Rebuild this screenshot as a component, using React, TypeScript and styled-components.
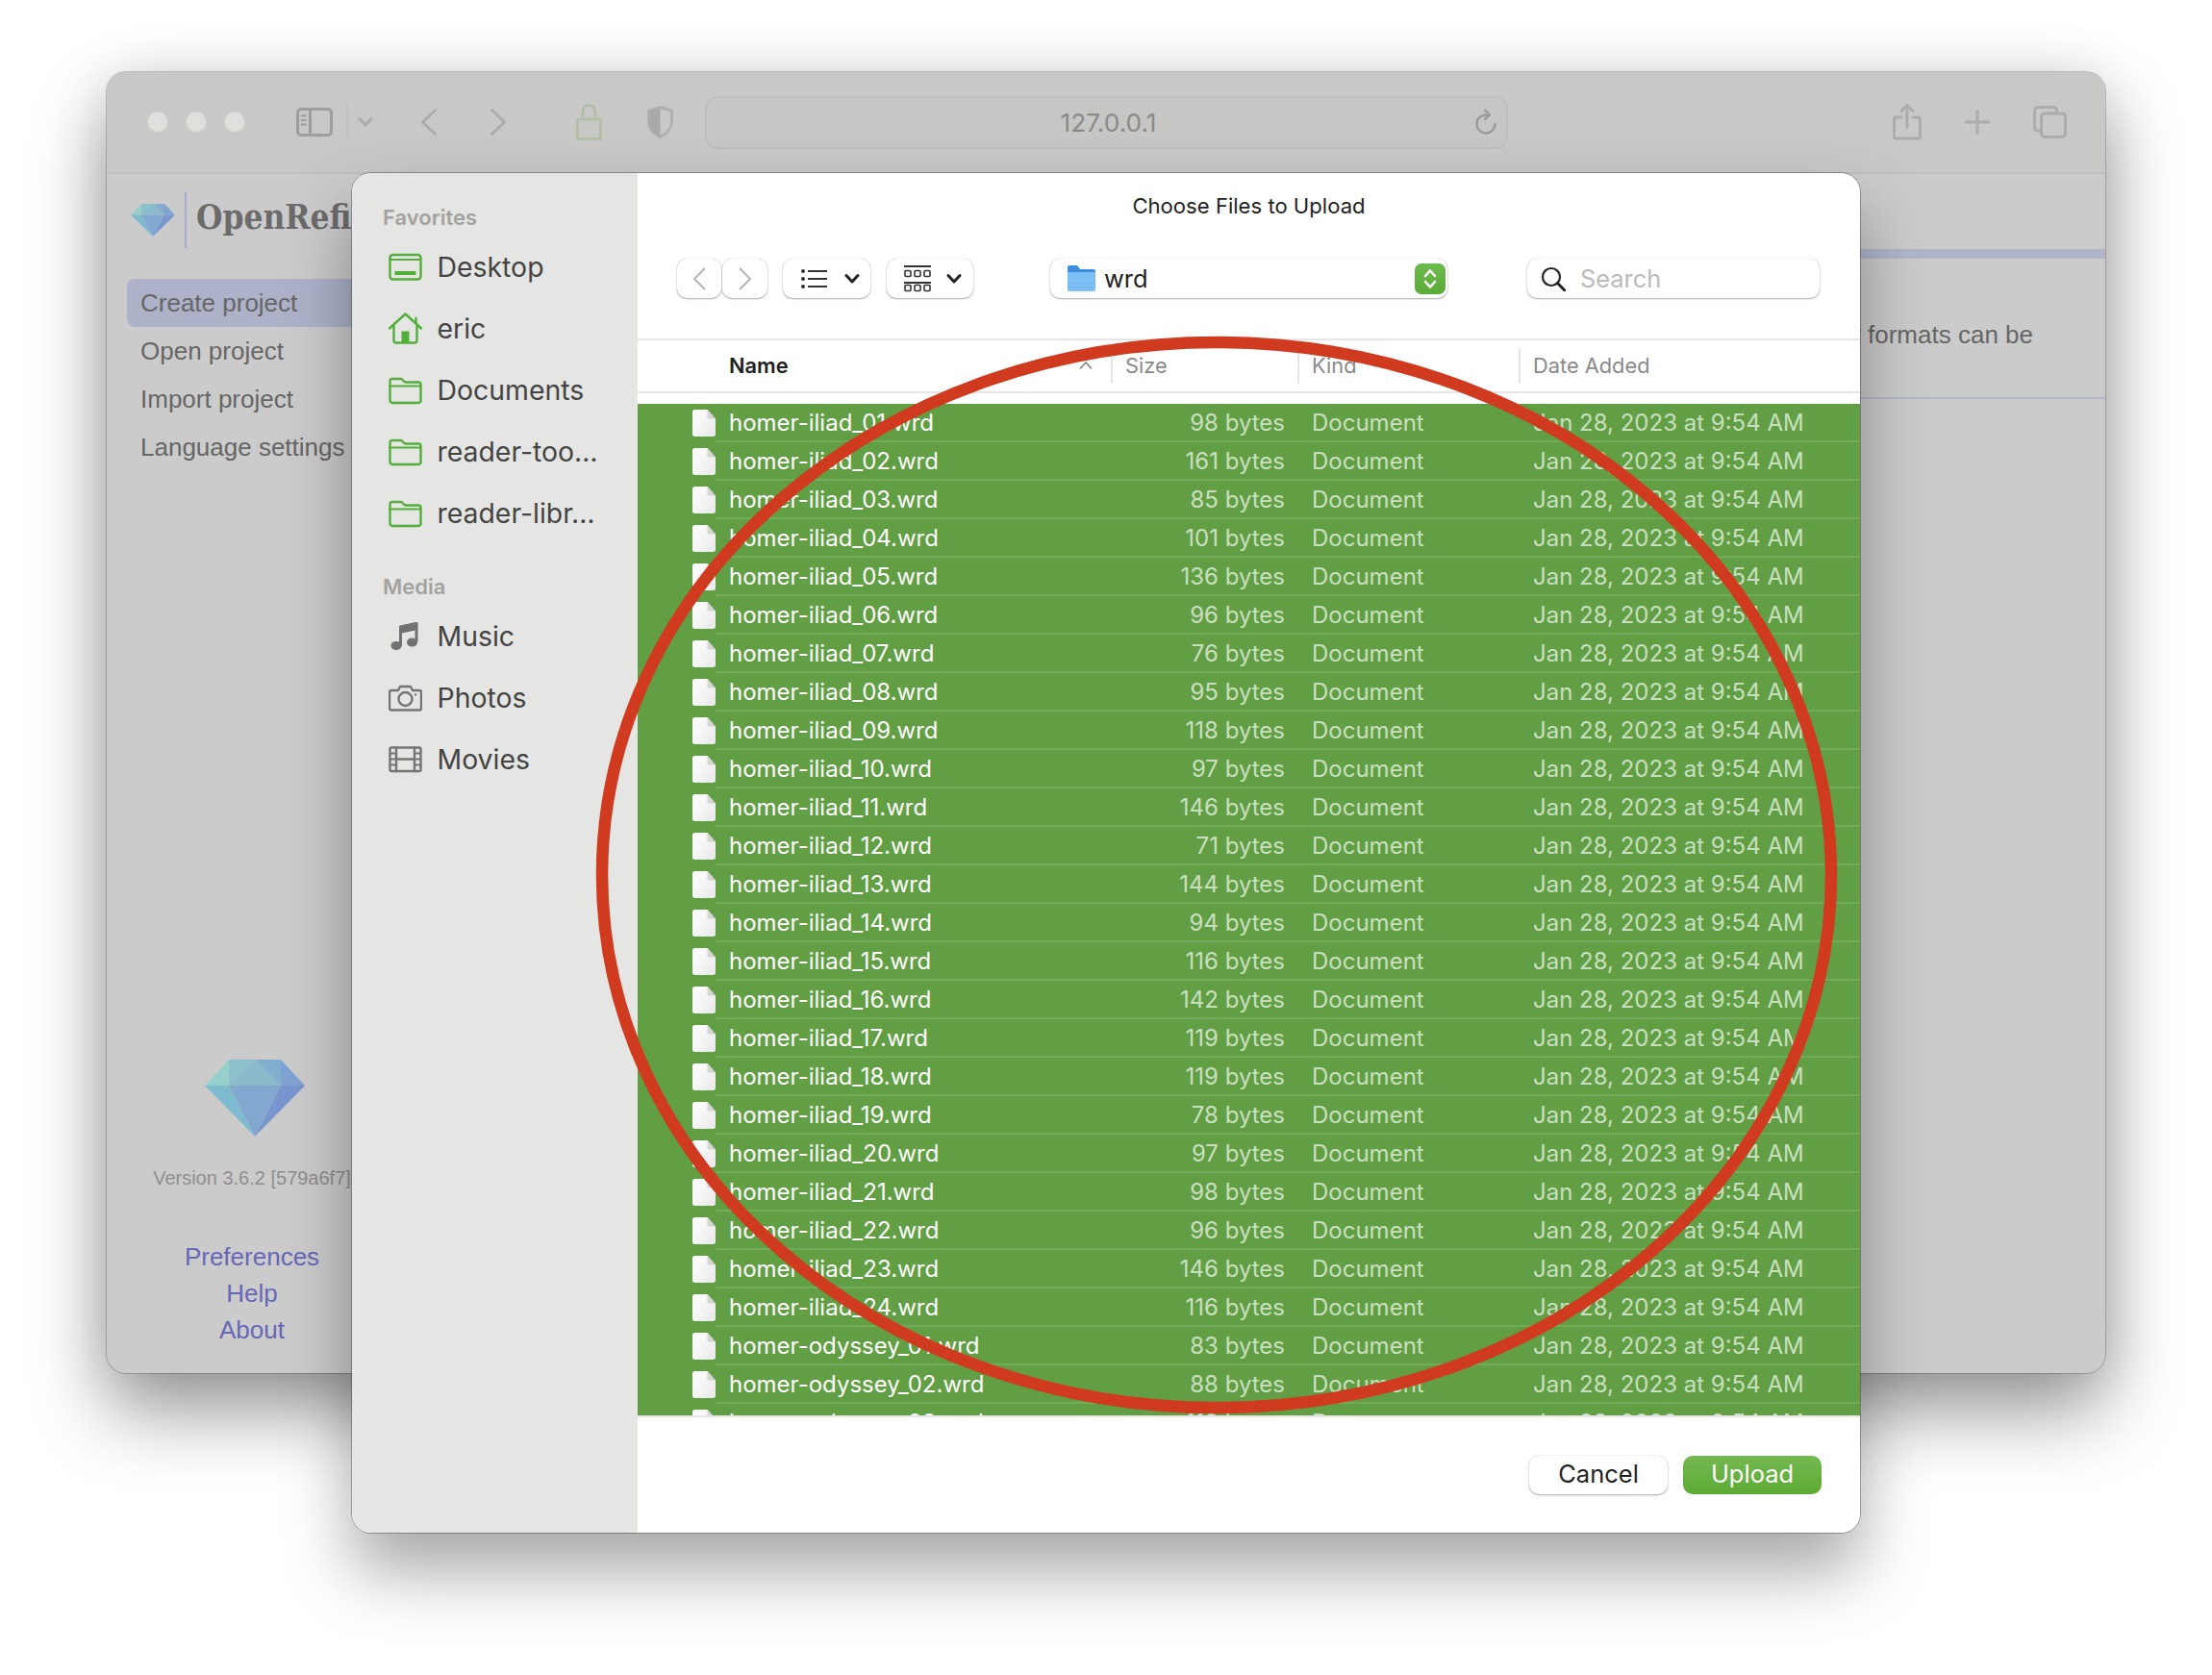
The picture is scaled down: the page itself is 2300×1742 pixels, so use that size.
import React from "react";
import styled, { createGlobalStyle } from "styled-components";

const Global = createGlobalStyle`
  html, body { margin: 0; padding: 0; background: #fff; }
  * { box-sizing: border-box; }
`;

const UI = `Inter, "Noto Sans", sans-serif`;
const WEB = `"Liberation Sans", Arial, sans-serif`;

const Page = styled.div`
  position: relative;
  width: 2300px;
  height: 1742px;
  padding: 75px 111px 0 111px;
  background: #fff;
  overflow: hidden;
`;

const BrowserWindow = styled.div`
  position: relative;
  width: 2078px;
  height: 1353px;
  display: flex;
  flex-direction: column;
  border-radius: 20px;
  background: #cbcbcb;
  box-shadow: 0 0 0 1px rgba(0, 0, 0, 0.2), 0 40px 80px rgba(0, 0, 0, 0.4), 0 0 60px rgba(0, 0, 0, 0.1);
`;

const Toolbar = styled.div`
  height: 106px;
  flex: none;
  display: flex;
  align-items: center;
  padding: 0 0 0 42px;
  background: #c8c8c6;
  border-bottom: 2px solid #bfbfbd;
  border-radius: 20px 20px 0 0;
`;

const Lights = styled.div`
  display: flex;
  gap: 18px;
`;

const Light = styled.span`
  width: 22px;
  height: 22px;
  border-radius: 50%;
  background: #dfdfdc;
  box-shadow: inset 0 0 0 1px #cfcfcc;
`;

const ToolIcon = styled.svg<{ $ml: number; $tone?: string }>`
  flex: none;
  display: block;
  margin-left: ${(p) => p.$ml}px;
  fill: none;
  stroke: ${(p) => p.$tone ?? "#acacaa"};
  stroke-width: 3;
  stroke-linecap: round;
  stroke-linejoin: round;
`;

const ToolDivider = styled.span`
  width: 2px;
  height: 36px;
  margin-left: 14px;
  background: #c0c0be;
`;

const UrlBar = styled.div`
  width: 835px;
  height: 55px;
  margin-left: 33px;
  display: grid;
  grid-template-columns: 1fr auto 1fr;
  align-items: center;
  padding: 0 9px 0 13px;
  border: 2px solid #bfbfbd;
  border-radius: 13px;
  background: #c6c6c4;
  color: #8a8a8a;
  font: 400 26.3px ${UI};
`;

const UrlText = styled.span`
  grid-column: 2;
`;

const ReloadIcon = styled.svg`
  justify-self: end;
  fill: none;
  stroke: #9a9a98;
  stroke-width: 2.4;
  stroke-linecap: round;
  stroke-linejoin: round;
`;

const Body = styled.div`
  flex: 1;
  min-height: 0;
  display: flex;
`;

const SideColumn = styled.div`
  width: 300px;
  flex: none;
  display: flex;
  flex-direction: column;
  padding: 19px 0 0 21px;
  font-family: ${WEB};
`;

const Brand = styled.div`
  display: flex;
  align-items: center;
  width: 234px;
  height: 58px;
  padding-left: 4px;
  overflow: hidden;
`;

const BrandRule = styled.span`
  width: 2px;
  height: 58px;
  flex: none;
  margin: 0 10px 0 10px;
  background: #a9aed0;
`;

const BrandName = styled.span`
  padding-bottom: 7px;
  font-family: "DejaVu Serif Condensed", "DejaVu Serif", serif;
  font-stretch: condensed;
  font-weight: 700;
  font-size: 35px;
  color: #6b6b6b;
  white-space: nowrap;
`;

const Nav = styled.nav`
  margin-top: 32px;
  width: 300px;
  display: flex;
  flex-direction: column;
`;

const NavItem = styled.div<{ $active?: boolean }>`
  height: 50px;
  display: flex;
  align-items: center;
  padding-left: 14px;
  border-radius: 8px 0 0 8px;
  background: ${(p) => (p.$active ? "#adb2c9" : "transparent")};
  color: #666;
  font-size: 26px;
  white-space: nowrap;
`;

const SideBottom = styled.div`
  margin: auto 0 0 -21px;
  width: 300px;
  padding: 0 0 26px 2px;
  display: flex;
  flex-direction: column;
  align-items: center;
`;

const BigGem = styled.div`
  margin-left: 6px;
`;

const Version = styled.div`
  margin-top: 32px;
  color: #8e8e8e;
  font-size: 20px;
  white-space: nowrap;
`;

const Links = styled.div`
  margin-top: 51px;
  display: flex;
  flex-direction: column;
  align-items: center;
  color: #6767b8;
  font-size: 26px;
  line-height: 38px;
`;

const MainPane = styled.div`
  flex: 1;
  min-width: 0;
  padding-top: 78px;
  display: flex;
  flex-direction: column;
  font-family: ${WEB};
`;

const Band = styled.div`
  height: 10px;
  background: #b0b5ca;
`;

const Blurb = styled.div`
  height: 146px;
  display: flex;
  align-items: center;
  justify-content: flex-end;
  padding: 15px 75px 0 0;
  border-bottom: 2px solid #b3b7cb;
  color: #666;
  font-size: 26px;
  white-space: nowrap;
  overflow: hidden;
`;

const Dialog = styled.div`
  position: absolute;
  left: 255px;
  top: 105px;
  width: 1568px;
  height: 1414px;
  display: flex;
  border-radius: 20px;
  background: #fff;
  overflow: hidden;
  font-family: ${UI};
`;

const DialogShadow = styled.div`
  position: absolute;
  left: 255px;
  top: 105px;
  width: 1568px;
  height: 1414px;
  border-radius: 20px;
  box-shadow: 0 0 0 1px rgba(0, 0, 0, 0.28), 0 40px 70px rgba(0, 0, 0, 0.35);
`;

const Favorites = styled.aside`
  width: 297px;
  flex: none;
  padding-top: 31px;
  background: #e5e5e3;
`;

const SideHeading = styled.div<{ $top?: number }>`
  height: 30px;
  margin: ${(p) => p.$top ?? 0}px 0 4px 32px;
  display: flex;
  align-items: center;
  color: #a2a2a0;
  font-size: 22px;
  font-weight: 600;
`;

const FavRow = styled.div`
  height: 64px;
  display: flex;
  align-items: center;
  gap: 15.5px;
  padding-left: 38px;
  color: #444;
  font-size: 28.4px;
  white-space: nowrap;
`;

const FavIcon = styled.svg<{ $tone?: string }>`
  width: 35px;
  height: 35px;
  flex: none;
  fill: none;
  stroke: ${(p) => p.$tone ?? "#52ae3a"};
  stroke-width: 2.4;
  stroke-linecap: round;
  stroke-linejoin: round;
`;

const Panel = styled.section`
  flex: 1;
  min-width: 0;
  display: flex;
  flex-direction: column;
`;

const Title = styled.div`
  height: 68px;
  flex: none;
  display: flex;
  align-items: center;
  justify-content: center;
  color: #222;
  font-size: 22.1px;
`;

const Tools = styled.div`
  height: 41px;
  flex: none;
  margin-top: 21px;
  display: flex;
  padding-left: 41px;
`;

const Ctl = styled.div<{ $w: number; $ml?: number; $pl?: number; $gap?: number }>`
  width: ${(p) => p.$w}px;
  margin-left: ${(p) => p.$ml ?? 0}px;
  height: 41px;
  flex: none;
  display: flex;
  align-items: center;
  justify-content: center;
  gap: ${(p) => p.$gap ?? 14}px;
  padding-left: ${(p) => p.$pl ?? 0}px;
  border-radius: 10px;
  background: #fff;
  box-shadow: 0 1px 2px rgba(0, 0, 0, 0.32), 0 0 1px rgba(0, 0, 0, 0.28);
`;

const PathCtl = styled(Ctl)`
  justify-content: flex-start;
  gap: 9px;
  padding: 0 2px 0 18px;
  color: #222;
  font-size: 25.5px;
`;

const PathName = styled.span`
  flex: 1;
`;

const Stepper = styled.span`
  width: 32px;
  height: 32px;
  display: flex;
  align-items: center;
  justify-content: center;
  border-radius: 7px;
  background: linear-gradient(#6dba4c, #5aab38);
`;

const SearchBox = styled(Ctl)`
  justify-content: flex-start;
  gap: 15px;
  padding-left: 14px;
  color: #bbb;
  font-size: 25.4px;
`;

const Svg = styled.svg`
  display: block;
  flex: none;
`;

const TableHead = styled.div`
  height: 57px;
  flex: none;
  margin-top: 42px;
  display: grid;
  grid-template-columns: 95px 397px 194px 230px 1fr;
  align-items: center;
  border-top: 2px solid #e6e6e6;
  border-bottom: 2px solid #e6e6e6;
  color: #8a8a8a;
  font-size: 21.8px;
`;

const HeadCell = styled.div<{ $strong?: boolean; $rule?: boolean; $col?: number }>`
  height: 36px;
  display: flex;
  align-items: center;
  justify-content: space-between;
  padding: 0 18px 2px ${(p) => (p.$rule ? 13 : 0)}px;
  border-left: ${(p) => (p.$rule ? "2px solid #e6e6e6" : "none")};
  color: ${(p) => (p.$strong ? "#222" : "#8a8a8a")};
  font-weight: ${(p) => (p.$strong ? 600 : 400)};
  grid-column: ${(p) => p.$col ?? "auto"};
`;

const List = styled.div`
  flex: 1;
  min-height: 0;
  margin-top: 11px;
  overflow: hidden;
  background: #629f44;
`;

const Row = styled.div`
  height: 40px;
  display: flex;
`;

const FileCell = styled.div`
  width: 81px;
  flex: none;
  padding: 6px 0 0 57px;
`;

const Cells = styled.div`
  flex: 1;
  display: grid;
  grid-template-columns: 398px 180px 258px 1fr;
  align-items: center;
  padding-left: 14px;
  border-bottom: 2px solid #74aa5b;
  font-size: 24px;
  color: rgba(255, 255, 255, 0.68);
  white-space: nowrap;
`;

const FileName = styled.span`
  color: #fff;
`;

const SizeCell = styled.span`
  text-align: right;
`;

const KindCell = styled.span`
  padding-left: 28px;
`;

const Foot = styled.div`
  height: 122px;
  flex: none;
  display: flex;
  justify-content: flex-end;
  gap: 16px;
  padding: 40px 40px 0 0;
  border-top: 2px solid #e6e6e6;
`;

const Btn = styled.div<{ $primary?: boolean }>`
  width: 144px;
  height: 40px;
  display: flex;
  align-items: center;
  justify-content: center;
  padding-bottom: 3px;
  border-radius: 10px;
  font-size: 25.5px;
  color: ${(p) => (p.$primary ? "#fff" : "#222")};
  background: ${(p) => (p.$primary ? "linear-gradient(#74b851, #5cab34)" : "#fff")};
  box-shadow: ${(p) => (p.$primary ? "none" : "0 1px 2px rgba(0,0,0,.32), 0 0 1px rgba(0,0,0,.28)")};
`;

const Ring = styled.svg`
  position: absolute;
  left: 614px;
  top: 344px;
  width: 1302px;
  height: 1132px;
  pointer-events: none;
`;

const Diamond: React.FC<{ width: number; height: number }> = ({ width, height }) => (
  <Svg width={width} height={height} viewBox="0 0 104 80" preserveAspectRatio="none">
    <polygon points="25,0 0,27 25,27" fill="#97d0ca" />
    <polygon points="25,0 52,0 25,27" fill="#8cc0ca" />
    <polygon points="52,0 79,0 79,27" fill="#83adce" />
    <polygon points="25,27 52,0 79,27" fill="#8abaca" />
    <polygon points="79,0 104,27 79,27" fill="#7fa3d2" />
    <polygon points="0,27 25,27 52,80" fill="#7fbbd0" />
    <polygon points="25,27 79,27 52,80" fill="#82a8cf" />
    <polygon points="79,27 104,27 52,80" fill="#7a96cf" />
  </Svg>
);

const FileIcon = () => (
  <Svg width="24" height="28" viewBox="0 0 24 28">
    <defs>
      <linearGradient id="pg" x1="0" y1="0" x2="1" y2="1">
        <stop offset="0" stopColor="#ffffff" />
        <stop offset="1" stopColor="#e9e9e9" />
      </linearGradient>
    </defs>
    <path d="M2.5 0H15.5L24 9.5V25.5a2.5 2.5 0 0 1-2.5 2.5H2.5A2.5 2.5 0 0 1 0 25.5V2.5A2.5 2.5 0 0 1 2.5 0Z" fill="url(#pg)" />
    <path d="M15.5 0L24 9.5H17.5a2 2 0 0 1-2-2Z" fill="#d4d4d4" />
  </Svg>
);

const FolderGlyph = () => (
  <FavIcon viewBox="0 0 35 35">
    <path d="M4 31H31a2.5 2.5 0 0 0 2.5-2.5V12a2.5 2.5 0 0 0-2.5-2.5H17L13.5 6H4A2.5 2.5 0 0 0 1.5 8.5V28.500A2.500 2.500 0 0 0 4 31Z" />
    <path d="M1.500 13.500H33.500" strokeWidth="1.800" />
  </FavIcon>
);

const Chevron: React.FC<{ stroke?: string }> = ({ stroke = "#222" }) => (
  <Svg width="16" height="12" viewBox="0 0 16 12">
    <path d="M2 2.500L8 9L14 2.500" fill="none" stroke={stroke} strokeWidth="3" strokeLinecap="round" strokeLinejoin="round" />
  </Svg>
);

const files: [string, number][] = [
  ["homer-iliad_01.wrd", 98], ["homer-iliad_02.wrd", 161], ["homer-iliad_03.wrd", 85],
  ["homer-iliad_04.wrd", 101], ["homer-iliad_05.wrd", 136], ["homer-iliad_06.wrd", 96],
  ["homer-iliad_07.wrd", 76], ["homer-iliad_08.wrd", 95], ["homer-iliad_09.wrd", 118],
  ["homer-iliad_10.wrd", 97], ["homer-iliad_11.wrd", 146], ["homer-iliad_12.wrd", 71],
  ["homer-iliad_13.wrd", 144], ["homer-iliad_14.wrd", 94], ["homer-iliad_15.wrd", 116],
  ["homer-iliad_16.wrd", 142], ["homer-iliad_17.wrd", 119], ["homer-iliad_18.wrd", 119],
  ["homer-iliad_19.wrd", 78], ["homer-iliad_20.wrd", 97], ["homer-iliad_21.wrd", 98],
  ["homer-iliad_22.wrd", 96], ["homer-iliad_23.wrd", 146], ["homer-iliad_24.wrd", 116],
  ["homer-odyssey_01.wrd", 83], ["homer-odyssey_02.wrd", 88], ["homer-odyssey_03.wrd", 112],
];

export default function App() {
  return (
    <Page>
      <Global />
      <BrowserWindow>
        <Toolbar>
          <Lights>
            <Light />
            <Light />
            <Light />
          </Lights>
          <ToolIcon $ml={53} $tone="#9e9e9c" width="38" height="30" viewBox="0 0 38 30">
            <rect x="1.500" y="1.500" width="35" height="27" rx="3.500" />
            <path d="M14.500 1.500V28.500" />
            <path d="M5.500 8.500H10M5.500 13H10M5.500 17.500H10" strokeWidth="2" />
          </ToolIcon>
          <ToolDivider />
          <ToolIcon $ml={10} width="16" height="12" viewBox="0 0 16 12">
            <path d="M2 2.500L8 9L14 2.500" />
          </ToolIcon>
          <ToolIcon $ml={50} width="16" height="28" viewBox="0 0 16 28">
            <path d="M14.500 1.500L1.500 14L14.500 26.500" />
          </ToolIcon>
          <ToolIcon $ml={56} width="16" height="28" viewBox="0 0 16 28">
            <path d="M1.500 1.500L14.500 14L1.500 26.500" />
          </ToolIcon>
          <ToolIcon $ml={73} $tone="#b3bfa9" width="27" height="38" viewBox="0 0 27 38">
            <rect x="1.500" y="16" width="24" height="20.500" rx="1" />
            <path d="M7 16V8a6.500 6.500 0 0 1 13 0V16" />
          </ToolIcon>
          <ToolIcon $ml={47} $tone="#b0b0ae" width="27" height="34" viewBox="0 0 27 34">
            <path d="M13.500 1.500L25.500 5V16c0 8-5 13-12 16.500C6.500 29 1.500 24 1.500 16V5Z" />
            <path d="M13.500 1.500V32.500C6.500 29 1.500 24 1.500 16V5Z" fill="#a9a9a7" stroke="none" />
          </ToolIcon>
          <UrlBar>
            <UrlText>127.0.0.1</UrlText>
            <ReloadIcon width="24" height="28" viewBox="0 0 24 28">
              <path d="M13 6.500A9.500 9.500 0 1 0 21.500 16" />
              <path d="M11 1.500L16 6.500L11 11" />
            </ReloadIcon>
          </UrlBar>
          <ToolIcon $ml={400} width="30" height="38" viewBox="0 0 30 38">
            <path d="M9 14H3.500A2 2 0 0 0 1.500 16V34A2 2 0 0 0 3.500 36H26.500A2 2 0 0 0 28.500 34V16A2 2 0 0 0 26.500 14H21" />
            <path d="M15 24V2M9 7.500L15 1.500L21 7.500" />
          </ToolIcon>
          <ToolIcon $ml={45} width="26" height="26" viewBox="0 0 26 26">
            <path d="M13 1.500V24.500M1.500 13H24.500" />
          </ToolIcon>
          <ToolIcon $ml={45} width="35" height="34" viewBox="0 0 35 34">
            <path d="M7.500 26H5A3.500 3.500 0 0 1 1.500 22.500V5A3.500 3.500 0 0 1 5 1.500H21A3.500 3.500 0 0 1 24.500 5V8" />
            <rect x="8.500" y="8" width="25" height="24.500" rx="3.500" />
          </ToolIcon>
        </Toolbar>
        <Body>
          <SideColumn>
            <Brand>
              <Diamond width={46} height={34} />
              <BrandRule />
              <BrandName>OpenRefine</BrandName>
            </Brand>
            <Nav>
              <NavItem $active>Create project</NavItem>
              <NavItem>Open project</NavItem>
              <NavItem>Import project</NavItem>
              <NavItem>Language settings</NavItem>
            </Nav>
            <SideBottom>
              <BigGem>
                <Diamond width={104} height={80} />
              </BigGem>
              <Version>Version 3.6.2 [579a6f7]</Version>
              <Links>
                <span>Preferences</span>
                <span>Help</span>
                <span>About</span>
              </Links>
            </SideBottom>
          </SideColumn>
          <MainPane>
            <Band />
            <Blurb>Data files in many other formats can be</Blurb>
          </MainPane>
        </Body>
        <DialogShadow />
        <Dialog>
          <Favorites>
            <SideHeading>Favorites</SideHeading>
            <FavRow>
              <FavIcon viewBox="0 0 35 35">
                <rect x="1.500" y="5" width="32" height="25.500" rx="3" />
                <path d="M1.500 10H33.500" strokeWidth="1.800" />
                <rect x="6.500" y="22" width="22" height="4" rx="0.500" fill="#52ae3a" stroke="none" />
              </FavIcon>
              Desktop
            </FavRow>
            <FavRow>
              <FavIcon viewBox="0 0 35 35">
                <path d="M1 17.500L17.500 2.500L34 17.500" />
                <path d="M28.500 7V12" />
                <path d="M5.500 15V30a2.500 2.500 0 0 0 2.500 2.500H27a2.500 2.500 0 0 0 2.500-2.500V15" />
                <rect x="13.500" y="20.500" width="8" height="12" fill="#52ae3a" stroke="none" />
              </FavIcon>
              eric
            </FavRow>
            <FavRow>
              <FolderGlyph />
              Documents
            </FavRow>
            <FavRow>
              <FolderGlyph />
              reader-too…
            </FavRow>
            <FavRow>
              <FolderGlyph />
              reader-libr…
            </FavRow>
            <SideHeading $top={30}>Media</SideHeading>
            <FavRow>
              <FavIcon viewBox="0 0 35 35" $tone="#727272">
                <path d="M12.500 27V8L29 4.500V23" fill="none" strokeWidth="3" />
                <path d="M12.500 8L29 4.500V10L12.500 13.500Z" fill="#727272" />
                <ellipse cx="8" cy="27.500" rx="5.500" ry="4.500" fill="#727272" stroke="none" />
                <ellipse cx="24.500" cy="24" rx="5.500" ry="4.500" fill="#727272" stroke="none" />
              </FavIcon>
              Music
            </FavRow>
            <FavRow>
              <FavIcon viewBox="0 0 35 35" $tone="#757575">
                <path d="M3 10H10L12 6H23L25 10H32A2 2 0 0 1 34 12V28.500A2 2 0 0 1 32 30.500H3A2 2 0 0 1 1 28.500V12A2 2 0 0 1 3 10Z" />
                <circle cx="17.500" cy="19" r="7" />
                <circle cx="28" cy="14.500" r="1.200" fill="#757575" stroke="none" />
              </FavIcon>
              Photos
            </FavRow>
            <FavRow>
              <FavIcon viewBox="0 0 35 35" $tone="#757575">
                <rect x="1.500" y="5.500" width="32" height="24.500" rx="1.500" />
                <path d="M8 5.500V30M27 5.500V30M8 17.500H27" />
                <path d="M1.500 11.500H8M1.500 17.500H8M1.500 23.500H8M27 11.500H33.500M27 17.500H33.500M27 23.500H33.500" strokeWidth="1.800" />
              </FavIcon>
              Movies
            </FavRow>
          </Favorites>
          <Panel>
            <Title>Choose Files to Upload</Title>
            <Tools>
              <Ctl $w={46}>
                <Svg width="16" height="26" viewBox="0 0 16 26">
                  <path d="M14 2L3 13L14 24" fill="none" stroke="#b5b5b5" strokeWidth="2" />
                </Svg>
              </Ctl>
              <Ctl $w={47} $ml={1}>
                <Svg width="16" height="26" viewBox="0 0 16 26">
                  <path d="M2 2L13 13L2 24" fill="none" stroke="#b5b5b5" strokeWidth="2" />
                </Svg>
              </Ctl>
              <Ctl $w={91} $ml={16} $pl={8} $gap={18}>
                <Svg width="27" height="20" viewBox="0 0 27 20">
                  <path d="M7 2H27M7 10H27M7 18H27" stroke="#333" strokeWidth="2" />
                  <circle cx="2" cy="2" r="2" fill="#333" />
                  <circle cx="2" cy="10" r="2" fill="#333" />
                  <circle cx="2" cy="18" r="2" fill="#333" />
                </Svg>
                <Chevron />
              </Ctl>
              <Ctl $w={90} $ml={17} $pl={6} $gap={16}>
                <Svg width="28" height="28" viewBox="0 0 28 28">
                  <path d="M0 1H28M0 18H28" stroke="#333" strokeWidth="2" fill="none" />
                  <g fill="none" stroke="#333" strokeWidth="1.600">
                    <rect x="1" y="5.500" width="6" height="6" rx="1" />
                    <rect x="11" y="5.500" width="6" height="6" rx="1" />
                    <rect x="21" y="5.500" width="6" height="6" rx="1" />
                    <rect x="1" y="20.500" width="6" height="6" rx="1" />
                    <rect x="11" y="20.500" width="6" height="6" rx="1" />
                    <rect x="21" y="20.500" width="6" height="6" rx="1" />
                  </g>
                </Svg>
                <Chevron />
              </Ctl>
              <PathCtl $w={413} $ml={80}>
                <Svg width="29" height="27" viewBox="0 0 29 27">
                  <path d="M0 2a2 2 0 0 1 2-2H10L13 4H27a2 2 0 0 1 2 2V10H0Z" fill="#3f8fe0" />
                  <path d="M0 7H29V25a2 2 0 0 1-2 2H2a2 2 0 0 1-2-2Z" fill="#7cc0f5" />
                  <path d="M0 19H29M0 22.500H29" stroke="#6eb4ec" strokeWidth="1" />
                </Svg>
                <PathName>wrd</PathName>
                <Stepper>
                  <Svg width="16" height="24" viewBox="0 0 16 24">
                    <path d="M3 9L8 3.500L13 9M3 15L8 20.500L13 15" fill="none" stroke="#fff" strokeWidth="2.600" strokeLinecap="round" strokeLinejoin="round" />
                  </Svg>
                </Stepper>
              </PathCtl>
              <SearchBox $w={304} $ml={83}>
                <Svg width="26" height="26" viewBox="0 0 26 26">
                  <circle cx="11" cy="11" r="9" fill="none" stroke="#222" strokeWidth="2.200" />
                  <path d="M17.500 17.500L25 25" stroke="#222" strokeWidth="3" strokeLinecap="round" />
                </Svg>
                Search
              </SearchBox>
            </Tools>
            <TableHead>
              <HeadCell $strong $col={2}>
                Name
                <Svg width="16" height="10" viewBox="0 0 16 10">
                  <path d="M2 8.500L8 2L14 8.500" fill="none" stroke="#8a8a8a" strokeWidth="1.800" />
                </Svg>
              </HeadCell>
              <HeadCell $rule>Size</HeadCell>
              <HeadCell $rule>Kind</HeadCell>
              <HeadCell $rule>Date Added</HeadCell>
            </TableHead>
            <List>
              {files.map(([name, size]) => (
                <Row key={name}>
                  <FileCell>
                    <FileIcon />
                  </FileCell>
                  <Cells>
                    <FileName>{name}</FileName>
                    <SizeCell>{size} bytes</SizeCell>
                    <KindCell>Document</KindCell>
                    <span>Jan 28, 2023 at 9:54 AM</span>
                  </Cells>
                </Row>
              ))}
            </List>
            <Foot>
              <Btn>Cancel</Btn>
              <Btn $primary>Upload</Btn>
            </Foot>
          </Panel>
        </Dialog>
      </BrowserWindow>
      <Ring viewBox="0 0 1302 1132">
        <ellipse cx="651" cy="566" rx="639" ry="554" fill="none" stroke="#d03a1f" strokeWidth="12.500" />
      </Ring>
    </Page>
  );
}
